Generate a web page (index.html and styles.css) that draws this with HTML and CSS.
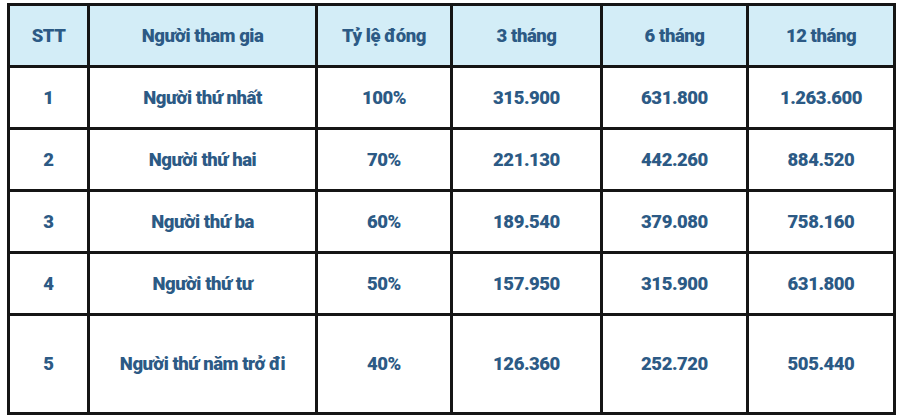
FILE: index.html
```html
<!DOCTYPE html>
<html lang="vi">
<head>
<meta charset="utf-8">
<title>Bảng mức đóng</title>
<link rel="stylesheet" href="styles.css">
</head>
<body>
<div class="table">
  <div class="cell head">STT</div>
  <div class="cell head">Người tham gia</div>
  <div class="cell head">Tỷ lệ đóng</div>
  <div class="cell head">3 tháng</div>
  <div class="cell head">6 tháng</div>
  <div class="cell head">12 tháng</div>

  <div class="cell">1</div>
  <div class="cell">Người thứ nhất</div>
  <div class="cell">100%</div>
  <div class="cell">315.900</div>
  <div class="cell">631.800</div>
  <div class="cell">1.263.600</div>

  <div class="cell">2</div>
  <div class="cell">Người thứ hai</div>
  <div class="cell">70%</div>
  <div class="cell">221.130</div>
  <div class="cell">442.260</div>
  <div class="cell">884.520</div>

  <div class="cell">3</div>
  <div class="cell">Người thứ ba</div>
  <div class="cell">60%</div>
  <div class="cell">189.540</div>
  <div class="cell">379.080</div>
  <div class="cell">758.160</div>

  <div class="cell">4</div>
  <div class="cell">Người thứ tư</div>
  <div class="cell">50%</div>
  <div class="cell">157.950</div>
  <div class="cell">315.900</div>
  <div class="cell">631.800</div>

  <div class="cell">5</div>
  <div class="cell">Người thứ năm trở đi</div>
  <div class="cell">40%</div>
  <div class="cell">126.360</div>
  <div class="cell">252.720</div>
  <div class="cell">505.440</div>
</div>
</body>
</html>
```
FILE: styles.css
```css
html, body {
  margin: 0;
  background: #ffffff;
}
body {
  padding: 3px 0 0 7px;
  font-family: Roboto, "Noto Sans", sans-serif;
}
.table {
  display: grid;
  grid-template-columns: 77px 225px 132px 147px 143px 144px;
  grid-template-rows: 59px 59px 59px 59px 59px 96px;
  gap: 3px;
  padding: 3px;
  width: max-content;
  background: #151515;
}
.cell {
  display: flex;
  align-items: center;
  justify-content: center;
  background: #ffffff;
  color: #2c5a85;
  font-weight: 900;
  font-size: 18.5px;
  letter-spacing: -0.45px;
}
.cell.head {
  background: #d3edf7;
}
```
